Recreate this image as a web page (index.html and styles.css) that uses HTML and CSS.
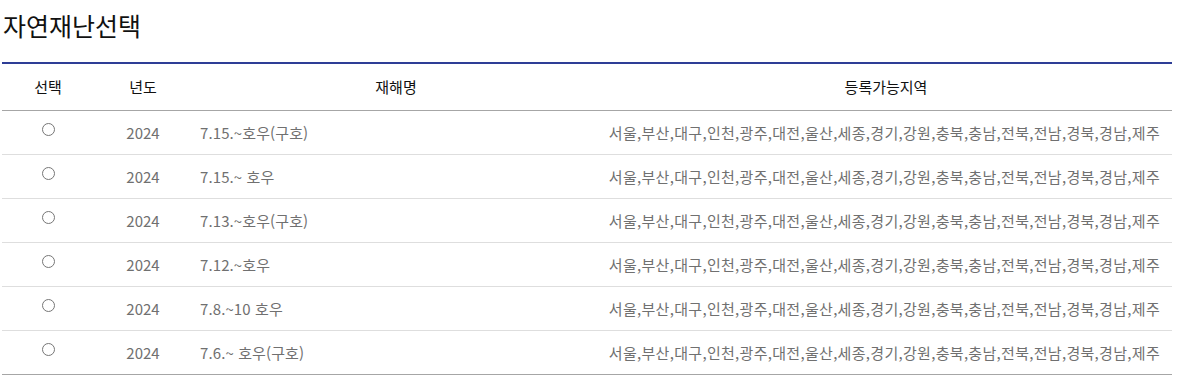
FILE: index.html
```html
<!DOCTYPE html>
<html lang="ko">
<head>
<meta charset="utf-8">
<title>자연재난선택</title>
<link rel="stylesheet" href="styles.css">
</head>
<body>
<div class="page">
  <h2 class="title">자연재난선택</h2>
  <table class="grid">
    <colgroup>
      <col class="c1"><col class="c2"><col class="c3"><col class="c4">
    </colgroup>
    <thead>
      <tr><th>선택</th><th>년도</th><th>재해명</th><th>등록가능지역</th></tr>
    </thead>
    <tbody>
      <tr><td class="sel"><input type="radio" name="d"></td><td class="ctr">2024</td><td class="name">7.15.~호우(구호)</td><td class="area">서울,부산,대구,인천,광주,대전,울산,세종,경기,강원,충북,충남,전북,전남,경북,경남,제주</td></tr>
      <tr><td class="sel"><input type="radio" name="d"></td><td class="ctr">2024</td><td class="name">7.15.~ 호우</td><td class="area">서울,부산,대구,인천,광주,대전,울산,세종,경기,강원,충북,충남,전북,전남,경북,경남,제주</td></tr>
      <tr><td class="sel"><input type="radio" name="d"></td><td class="ctr">2024</td><td class="name">7.13.~호우(구호)</td><td class="area">서울,부산,대구,인천,광주,대전,울산,세종,경기,강원,충북,충남,전북,전남,경북,경남,제주</td></tr>
      <tr><td class="sel"><input type="radio" name="d"></td><td class="ctr">2024</td><td class="name">7.12.~호우</td><td class="area">서울,부산,대구,인천,광주,대전,울산,세종,경기,강원,충북,충남,전북,전남,경북,경남,제주</td></tr>
      <tr><td class="sel"><input type="radio" name="d"></td><td class="ctr">2024</td><td class="name">7.8.~10 호우</td><td class="area">서울,부산,대구,인천,광주,대전,울산,세종,경기,강원,충북,충남,전북,전남,경북,경남,제주</td></tr>
      <tr><td class="sel"><input type="radio" name="d"></td><td class="ctr">2024</td><td class="name">7.6.~ 호우(구호)</td><td class="area">서울,부산,대구,인천,광주,대전,울산,세종,경기,강원,충북,충남,전북,전남,경북,경남,제주</td></tr>
    </tbody>
  </table>
</div>
</body>
</html>
```
FILE: styles.css
```css
html, body {
  margin: 0;
  padding: 0;
  background: #fff;
}
body {
  font-family: "Noto Sans CJK KR", "Noto Sans", sans-serif;
  color: #222;
}
.page {
  width: 1170px;
  padding: 0 2px;
}
.title {
  margin: 0;
  padding: 8px 0 0 1px;
  height: 62px;
  box-sizing: border-box;
  font-size: 25px;
  font-weight: 400;
  line-height: 34px;
  color: #111;
}
.grid {
  width: 1170px;
  border-collapse: collapse;
  table-layout: fixed;
  border-top: 2px solid #2e3d96;
  border-bottom: 1px solid #a6a6a6;
  font-size: 15px;
}
.c1 { width: 92px; }
.c2 { width: 98px; }
.c3 { width: 408px; }
.c4 { width: 572px; }
.grid th {
  height: 47px;
  padding: 0;
  font-weight: 400;
  color: #111;
  text-align: center;
  border-bottom: 1px solid #a6a6a6;
  vertical-align: middle;
  box-sizing: border-box;
}
.grid td {
  height: 44px;
  padding: 0;
  color: #707070;
  border-bottom: 1px solid #dedede;
  vertical-align: middle;
  box-sizing: border-box;
  white-space: nowrap;
}
.grid tbody tr:last-child td {
  border-bottom: 1px solid #a6a6a6;
}
.ctr { text-align: center; }
.grid td.sel {
  vertical-align: top;
  padding-top: 12px;
}
.name { padding-left: 8px !important; letter-spacing: 0.1px; }
.area { text-align: right; padding-right: 12px !important; letter-spacing: 0.3px; }
.grid input[type="radio"] {
  display: block;
  margin: 0 auto;
  width: 13px;
  height: 13px;
}
```
